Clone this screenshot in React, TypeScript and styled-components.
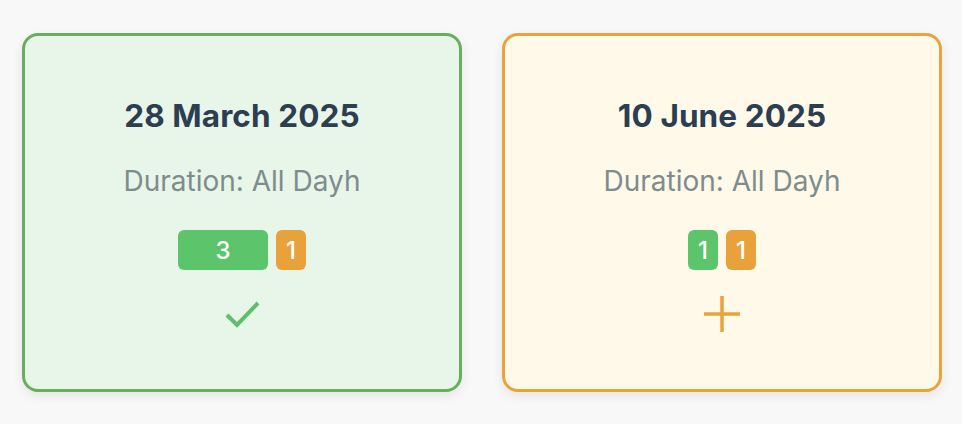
import React from "react";
import styled, { createGlobalStyle } from "styled-components";

const GlobalStyle = createGlobalStyle`
  html, body {
    margin: 0;
    padding: 0;
    background: #f8f8f8;
    font-family: Inter, "Noto Sans", "Liberation Sans", sans-serif;
  }
  * { box-sizing: border-box; }
`;

const Page = styled.div`
  display: flex;
  gap: 40px;
  padding: 33px 20px 32px 22px;
  width: 962px;
  height: 424px;
`;

type Tone = "green" | "orange";

const tones = {
  green: { bg: "#e8f5e9", border: "#67ae5d", icon: "#5dbf69" },
  orange: { bg: "#fef9e9", border: "#e9a23c", icon: "#e9a23c" },
};

const Card = styled.div<{ $tone: Tone }>`
  width: 440px;
  height: 359px;
  border: 3px solid ${(p) => tones[p.$tone].border};
  background: ${(p) => tones[p.$tone].bg};
  border-radius: 16px;
  box-shadow: 0 4px 12px rgba(0, 0, 0, 0.08);
  display: flex;
  flex-direction: column;
  align-items: center;
  padding-top: 60px;
`;

const Title = styled.div`
  font-size: 31.5px;
  line-height: 39px;
  font-weight: 700;
  color: #2c3e50;
  letter-spacing: 0.1px;
`;

const Duration = styled.div`
  margin-top: 29px;
  font-size: 28px;
  line-height: 34px;
  color: #7f8c8d;
`;

const Badges = styled.div`
  margin-top: 32px;
  display: flex;
  gap: 8px;
`;

const Badge = styled.div<{ $tone: Tone; $width: number }>`
  width: ${(p) => p.$width}px;
  height: 40px;
  border-radius: 6px;
  background: ${(p) => (p.$tone === "green" ? "#5cc46b" : "#e9a23b")};
  color: #ffffff;
  font-size: 24px;
  font-weight: 500;
  display: flex;
  align-items: center;
  justify-content: center;
`;

const IconBox = styled.div<{ $tone: Tone }>`
  margin-top: 26px;
  width: 36px;
  height: 36px;
  color: ${(p) => tones[p.$tone].icon};
  display: flex;
  align-items: center;
  justify-content: center;
`;

const Check = () => (
  <svg width="36" height="36" viewBox="0 0 36 36" fill="none">
    <polyline
      points="3,19 13,29 34,7"
      stroke="currentColor"
      strokeWidth="4"
      strokeLinecap="butt"
      strokeLinejoin="miter"
    />
  </svg>
);

const Plus = () => (
  <svg width="36" height="36" viewBox="0 0 36 36" fill="none">
    <line x1="0" y1="18" x2="36" y2="18" stroke="currentColor" strokeWidth="3.5" />
    <line x1="18" y1="0" x2="18" y2="36" stroke="currentColor" strokeWidth="3.5" />
  </svg>
);

type DayCardProps = {
  tone: Tone;
  date: string;
  done: number;
  pending: number;
  doneWidth: number;
};

const DayCard = ({ tone, date, done, pending, doneWidth }: DayCardProps) => (
  <Card $tone={tone}>
    <Title>{date}</Title>
    <Duration>Duration: All Dayh</Duration>
    <Badges>
      <Badge $tone="green" $width={doneWidth}>{done}</Badge>
      <Badge $tone="orange" $width={30}>{pending}</Badge>
    </Badges>
    <IconBox $tone={tone}>{tone === "green" ? <Check /> : <Plus />}</IconBox>
  </Card>
);

export default function App() {
  return (
    <>
      <GlobalStyle />
      <Page>
        <DayCard tone="green" date="28 March 2025" done={3} pending={1} doneWidth={90} />
        <DayCard tone="orange" date="10 June 2025" done={1} pending={1} doneWidth={30} />
      </Page>
    </>
  );
}
